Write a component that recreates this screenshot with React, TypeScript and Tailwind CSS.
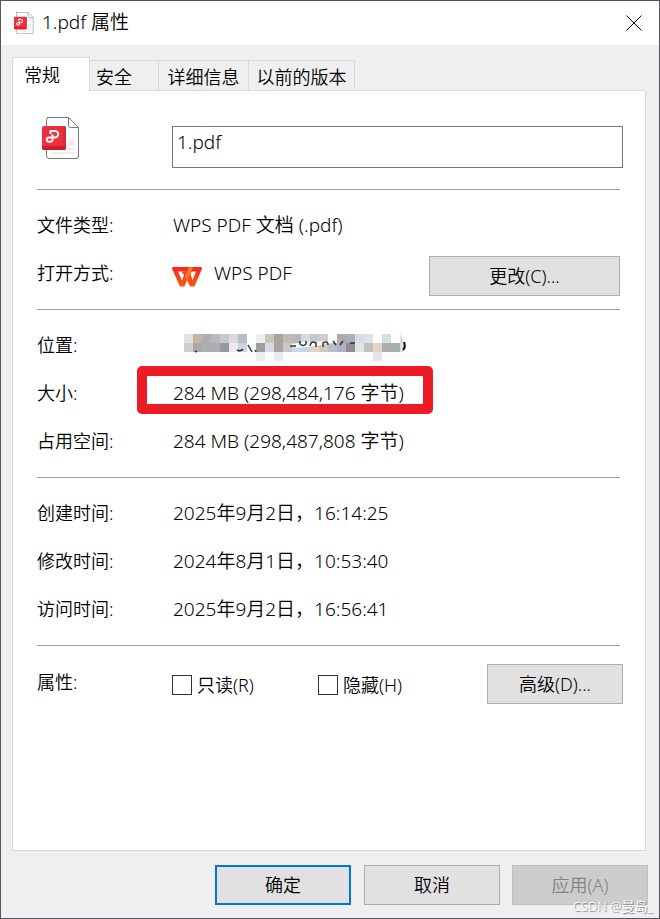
import { ReactNode } from "react";

const mosaic: [number, number, string][] = [
  [0, 0, "#dfe1e6"], [1, 0, "#c4b5a5"], [2, 0, "#aeadb0"], [3, 0, "#b9b8ba"], [4, 0, "#c6c9cc"],
  [5, 0, "#d8dade"], [6, 0, "#bcbcbc"], [8, 0, "#ebefee"], [9, 0, "#cac5be"], [10, 0, "#aaa49f"],
  [11, 0, "#c3bab0"], [12, 0, "#b6b9b7"], [13, 0, "#cedde8"], [14, 0, "#c5c8cb"], [15, 0, "#d5cbca"],
  [17, 0, "#adadb0"], [18, 0, "#abb1bb"], [19, 0, "#d6dde4"], [20, 0, "#dde2e7"], [22, 0, "#d3e1dd"],
  [0, 1, "#cfcfd3"], [1, 1, "#a9a9ad"], [2, 1, "#acadaf"], [3, 1, "#adadb0"], [4, 1, "#929b9d"],
  [5, 1, "#efeae8"], [6, 1, "#c9d6e3"], [8, 1, "#9c9f99"], [9, 1, "#d6dbe3"], [10, 1, "#aaa49f"],
  [11, 1, "#c7c8c9"], [12, 1, "#c7d9ec"], [13, 1, "#c4d7e9"], [14, 1, "#e1d2c3"], [15, 1, "#d0c8c2"],
  [16, 1, "#b9bfc9"], [17, 1, "#abb3c3"], [18, 1, "#918c8d"], [19, 1, "#e0e5e6"], [20, 1, "#bfc0c1"],
  [21, 1, "#e3d5c5"], [22, 1, "#adadae"], [23, 1, "#acadb0"],
  [8, 2, "#ebefee"], [10, 2, "#e8ecf4"], [21, 2, "#e5e6e6"],
];

function PdfIcon({ className }: { className: string }) {
  return (
    <svg className={className} viewBox="0 0 38 42" fill="none" aria-hidden="true">
      <path d="M5 .5H26.500L36.500 10.500V39a2.500 2.500 0 0 1-2.500 2.500H7A2.500 2.500 0 0 1 4.500 39V3A2.500 2.500 0 0 1 7 .5Z" fill="#fff" stroke="#777" />
      <path d="M26.500 .5V8.500a2 2 0 0 0 2 2H36.500" stroke="#777" />
      <rect x="26" y="23" width="6" height="6" rx="1" fill="#fde6e8" />
      <path d="M25 32H32M9 36H32" stroke="#fde6e8" strokeWidth="2" />
      <rect y="9" width="24" height="24" rx="2" fill="#ee2f3c" />
      <path d="M0 29H24V31a2 2 0 0 1-2 2H2a2 2 0 0 1-2-2Z" fill="#c9202c" />
      <path d="M21 9h1a2 2 0 0 1 2 2V29h-3Z" fill="#dc2836" />
      <path d="M8.500 17V14H13a3.200 3.200 0 0 1 0 6.400H7a2.200 2.200 0 0 0 0 4.400h1.200a2.300 2.300 0 0 0 2.300-2.300V17.500" stroke="#fff" strokeWidth="2" />
    </svg>
  );
}

function WpsLogo() {
  return (
    <svg className="mt-2 -ml-px h-5 w-[30px]" viewBox="0 0 30 20" aria-hidden="true">
      <defs>
        <linearGradient id="wps" x1="0" y1="0" x2="0" y2="1">
          <stop offset="0" stopColor="#fb2420" />
          <stop offset="1" stopColor="#ff5a12" />
        </linearGradient>
      </defs>
      <path d="M1.500 0H28.500a1.500 1.500 0 0 1 1.300 2L22.500 19.500H18L15 13 12.500 19.500H8L.2 2A1.500 1.500 0 0 1 1.500 0Z" fill="url(#wps)" />
      <path d="M17 0H21L15 13.500 13 9.500Z" fill="#ff7a2a" />
      <path d="M6 4.500H13.500L10 13.500ZM18.500 7L20.500 13.500 24 4.500H19.500Z" fill="#fff" />
      <path d="M9.500 4.500L12.500 9 14.500 4.500Z" fill="#fc3a1d" />
    </svg>
  );
}

function Row({ label, children }: { label: string; children: ReactNode }) {
  return (
    <div className="flex h-12 items-center">
      <dt className="w-[136px] shrink-0">{label}</dt>
      <dd className="relative flex min-w-0 flex-1 items-center text-[19px]">{children}</dd>
    </div>
  );
}

function Section({ children }: { children: ReactNode }) {
  return <dl className="mr-[25px] border-t border-[#a0a0a0] pt-[11px] pb-3">{children}</dl>;
}

const buttonClass = "h-10 border border-[#adadad] bg-[#e1e1e1] text-[18px]";

export default function App() {
  return (
    <div className="flex min-h-screen flex-col border border-[#55565c] bg-[#efefef] font-['Noto_Sans','Noto_Sans_CJK_SC',sans-serif] text-[18px] leading-6 font-[350] text-black">
      <header className="flex h-11 shrink-0 items-center bg-white pr-4 pl-[13px]">
        <PdfIcon className="h-[22px] w-5" />
        <h1 className="ml-2 flex-1 pb-0.5 text-[19px] font-[350]">1.pdf 属性</h1>
        <button aria-label="关闭" className="flex size-[18px] items-center justify-center">
          <svg className="size-4" viewBox="0 0 16 16" fill="none" stroke="#000" aria-hidden="true">
            <path d="M.5 .5L15.500 15.500M15.500 .5L.5 15.500" />
          </svg>
        </button>
      </header>

      <main className="flex flex-1 flex-col pt-3 pr-[13px] pl-[11px]">
        <div role="tablist" className="flex h-[33px] items-end">
          <button role="tab" aria-selected="true" className="z-10 -mb-px h-[34px] w-[78px] shrink-0 border border-b-0 border-[#d9d9d9] bg-white pr-[18px]">
            常规
          </button>
          <button role="tab" aria-selected="false" className="h-[30px] w-[69px] shrink-0 border-t border-r border-[#d9d9d9] pt-0.5 pr-5">
            安全
          </button>
          <button role="tab" aria-selected="false" className="h-[30px] w-[90px] shrink-0 border-t border-r border-[#d9d9d9] pt-0.5">
            详细信息
          </button>
          <button role="tab" aria-selected="false" className="h-[30px] w-[106px] shrink-0 border-t border-r border-[#d9d9d9] pt-0.5">
            以前的版本
          </button>
        </div>

        <section role="tabpanel" aria-label="常规" className="flex-1 border border-[#d9d9d9] bg-white pl-6">
          <div className="flex h-[98px] items-start pr-[22px]">
            <div className="w-[135px] shrink-0 pt-[26px] pl-[5px]">
              <PdfIcon className="h-[42px] w-[38px]" />
            </div>
            <input
              aria-label="文件名"
              defaultValue="1.pdf"
              className="mt-[35px] h-[42px] min-w-0 flex-1 border border-[#767676] px-1 pb-2.5 text-[19px] outline-none"
            />
          </div>

          <Section>
            <Row label="文件类型:">WPS PDF 文档 (.pdf)</Row>
            <Row label="打开方式:">
              <WpsLogo />
              <span className="ml-3 flex-1">WPS PDF</span>
              <button className={`${buttonClass} mt-1.5 w-[191px]`}>更改(C)...</button>
            </Row>
          </Section>

          <Section>
            <Row label="位置:">
              <svg className="ml-[11px] h-[27px] w-[223px]" viewBox="0 -2 223 27" overflow="visible" aria-hidden="true">
                {mosaic.map(([x, y, color]) => (
                  <rect key={`${x}-${y}`} x={x * 9} y={y * 9} width="9" height="9" fill={color} shapeRendering="crispEdges" />
                ))}
                <path d="M65 14l4-1 1 5h-4ZM105 11l15-3 26-1 8 1-22 4-20 2Z" fill="#fff" />
                <path d="M11 17l2 1M53 16q4 2 6-1M64 11l4 7M71 16l1 2M106 12h6M116 7v3q3 3 6 0V7M132 13V9q-5-3-6 3M139 13V9q5-3 5 2M149 7l3 4M159 7l-3 4M166 9h5" fill="none" stroke="#333" strokeWidth="1.5" />
                <path d="M216 0q6 9 3 18h-3Z" fill="#dcdde6" />
                <path d="M220 8q2 5-1 8" fill="none" stroke="#111" strokeWidth="2" />
              </svg>
            </Row>
            <Row label="大小:">
              284 MB (298,484,176 字节)
              <div className="absolute -top-[15px] -left-9 h-12 w-[296px] rounded-[5px] border-10 border-[#ed1c24]" />
            </Row>
            <Row label="占用空间:">284 MB (298,487,808 字节)</Row>
          </Section>

          <Section>
            <Row label="创建时间:">2025年9月2日，16:14:25</Row>
            <Row label="修改时间:">2024年8月1日，10:53:40</Row>
            <Row label="访问时间:">2025年9月2日，16:56:41</Row>
          </Section>

          <div className="mr-[25px] border-t border-[#a0a0a0]" />
          <div className="flex items-center pt-[18px] pr-[22px]">
            <span className="w-[135px] shrink-0 pb-1">属性:</span>
            <label className="flex w-[146px] items-center gap-[5px] pt-0.5">
              <input type="checkbox" className="size-5 appearance-none border border-[#333] bg-white" />
              只读(R)
            </label>
            <label className="flex flex-1 items-center gap-[5px] pt-0.5">
              <input type="checkbox" className="size-5 appearance-none border border-[#333] bg-white" />
              隐藏(H)
            </label>
            <button className={`${buttonClass} w-[136px]`}>高级(D)...</button>
          </div>
        </section>
      </main>

      <footer className="relative flex justify-end gap-3 pt-[14px] pr-[11px] pb-[13px]">
        <button className="mr-px h-10 w-[136px] border-2 border-[#0078d7] bg-[#e1e1e1]">确定</button>
        <button className={`${buttonClass} w-[136px]`}>取消</button>
        <button disabled className="h-10 w-[136px] border border-[#bfbfbf] bg-[#cccccc] text-[#838383]">应用(A)</button>
        <span className="absolute right-1.5 bottom-0.5 text-[13px] leading-5 text-white [text-shadow:1px_1px_1px_#777]">CSDN @曼岛_</span>
      </footer>
    </div>
  );
}
